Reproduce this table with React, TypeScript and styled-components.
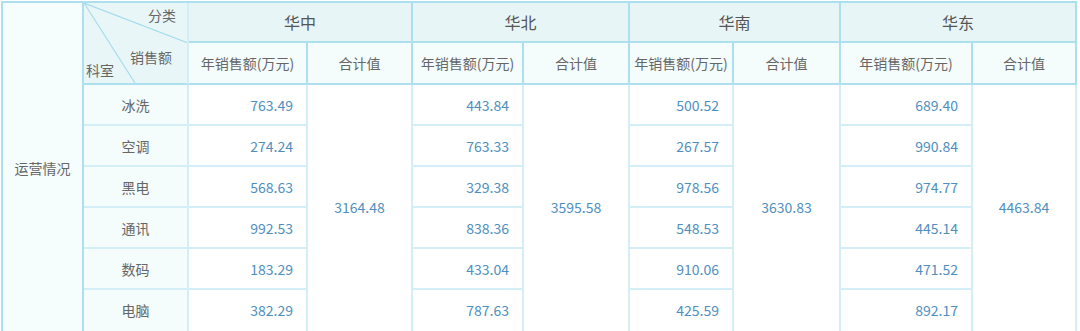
import { FC } from 'react';
import styled, { createGlobalStyle } from 'styled-components';

const GlobalStyle = createGlobalStyle`
  html, body {
    margin: 0;
    padding: 0;
    background: #ffffff;
    overflow: hidden;
  }
  body {
    font-family: "Noto Sans CJK SC", "Noto Sans", sans-serif;
  }
`;

const categories = ['冰洗', '空调', '黑电', '通讯', '数码', '电脑'];

const regions = [
  { name: '华中', total: '3164.48', values: ['763.49', '274.24', '568.63', '992.53', '183.29', '382.29'] },
  { name: '华北', total: '3595.58', values: ['443.84', '763.33', '329.38', '838.36', '433.04', '787.63'] },
  { name: '华南', total: '3630.83', values: ['500.52', '267.57', '978.56', '548.53', '910.06', '425.59'] },
  { name: '华东', total: '4463.84', values: ['689.40', '990.84', '974.77', '445.14', '471.52', '892.17'] },
];

const LINE = '#d3eef6';
const DARK_LINE = '#ace0ee';

const Page = styled.div`
  padding: 1px 0 0 1px;
`;

const Grid = styled.div`
  display: grid;
  grid-template-columns: 81px 105px 119px 105px 111px 106px 104px 107px 132px 104px;
  grid-template-rows: 40px 42px repeat(5, 41px) 44px;
  width: max-content;
  border-left: 2px solid ${DARK_LINE};
  border-top: 2px solid ${DARK_LINE};
`;

type Tone = 'side' | 'head' | 'sub' | 'body';

const bgFor: Record<Tone, string> = {
  side: '#f5fdfd',
  head: '#e7f5f7',
  sub: '#f4fcfc',
  body: '#ffffff',
};

const Cell = styled.div<{ $col: string; $row: string; $tone: Tone; $align?: 'center' | 'right'; $dark?: boolean }>`
  grid-column: ${(p) => p.$col};
  grid-row: ${(p) => p.$row};
  box-sizing: border-box;
  display: flex;
  align-items: center;
  justify-content: ${(p) => (p.$align === 'right' ? 'flex-end' : 'center')};
  padding: ${(p) => (p.$align === 'right' ? '0 13px 0 0' : '0')};
  background: ${(p) => bgFor[p.$tone]};
  border-right: 2px solid ${(p) => (p.$dark ? DARK_LINE : LINE)};
  border-bottom: 2px solid ${(p) => (p.$dark ? DARK_LINE : LINE)};
  font-size: 14px;
  color: #666666;
  white-space: nowrap;
`;

// the last row runs past the bottom of the window, lift its text back up
const BottomCell = styled(Cell)`
  padding-bottom: 3px;
`;

const RegionName = styled.span`
  font-size: 16px;
  color: #555555;
`;

const Num = styled.span`
  color: #4f8fc0;
  font-size: 14px;
`;

const DiagCell = styled.div`
  grid-column: 2;
  grid-row: 1 / span 2;
  position: relative;
  box-sizing: border-box;
  background: #e9f6f7;
  border-right: 2px solid ${LINE};
  border-bottom: 2px solid ${DARK_LINE};
  font-size: 14px;
  color: #666666;
`;

const DiagLines = styled.svg`
  position: absolute;
  left: 0;
  top: 0;
  width: 103px;
  height: 80px;
`;

const DiagLabel = styled.span<{ $x: number; $y: number }>`
  position: absolute;
  left: ${(p) => p.$x}px;
  top: ${(p) => p.$y}px;
  line-height: 20px;
  white-space: nowrap;
`;

const App: FC = () => {
  return (
    <Page>
      <GlobalStyle />
      <Grid>
        <Cell $col="1" $row="1 / span 8" $tone="side" $dark>
          运营情况
        </Cell>

        <DiagCell>
          <DiagLines viewBox="0 0 103 80">
            <line x1="0" y1="0" x2="104" y2="40" stroke="#a6dced" strokeWidth="1.2" />
            <line x1="0" y1="0" x2="51" y2="80" stroke="#a6dced" strokeWidth="1.2" />
          </DiagLines>
          <DiagLabel $x={64} $y={2}>分类</DiagLabel>
          <DiagLabel $x={46} $y={44}>销售额</DiagLabel>
          <DiagLabel $x={2} $y={57}>科室</DiagLabel>
        </DiagCell>

        {regions.map((r, i) => (
          <Cell key={r.name} $col={`${3 + i * 2} / span 2`} $row="1" $tone="head" $dark>
            <RegionName>{r.name}</RegionName>
          </Cell>
        ))}

        {regions.map((r, i) => [
          <Cell key={`${r.name}-a`} $col={`${3 + i * 2}`} $row="2" $tone="sub" $dark>
            年销售额(万元)
          </Cell>,
          <Cell key={`${r.name}-b`} $col={`${4 + i * 2}`} $row="2" $tone="sub" $dark>
            合计值
          </Cell>,
        ])}

        {categories.map((c, j) => {
          const Row = j === categories.length - 1 ? BottomCell : Cell;
          return (
            <Row key={c} $col="2" $row={`${3 + j}`} $tone="sub">
              {c}
            </Row>
          );
        })}

        {regions.map((r, i) =>
          r.values.map((v, j) => {
            const Row = j === r.values.length - 1 ? BottomCell : Cell;
            return (
              <Row key={`${r.name}-${j}`} $col={`${3 + i * 2}`} $row={`${3 + j}`} $tone="body" $align="right">
                <Num>{v}</Num>
              </Row>
            );
          }),
        )}

        {regions.map((r, i) => (
          <BottomCell key={`${r.name}-total`} $col={`${4 + i * 2}`} $row="3 / span 6" $tone="body">
            <Num>{r.total}</Num>
          </BottomCell>
        ))}
      </Grid>
    </Page>
  );
};

export default App;
